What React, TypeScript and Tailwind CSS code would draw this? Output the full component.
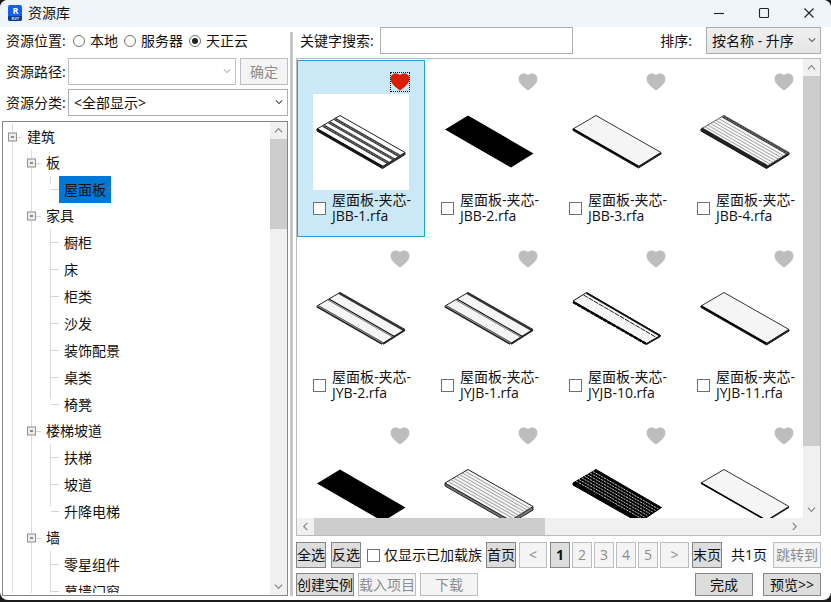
import { useState } from "react";
import type { ReactNode } from "react";
import { clsx } from "clsx";

type Variant =
  | "ribbed"
  | "black"
  | "plain"
  | "lined"
  | "double"
  | "narrow"
  | "thin"
  | "striped"
  | "mesh";

const parts: { id: number; name?: string; variant: Variant }[] = [
  { id: 1, name: "屋面板-夹芯-JBB-1.rfa", variant: "ribbed" },
  { id: 2, name: "屋面板-夹芯-JBB-2.rfa", variant: "black" },
  { id: 3, name: "屋面板-夹芯-JBB-3.rfa", variant: "plain" },
  { id: 4, name: "屋面板-夹芯-JBB-4.rfa", variant: "lined" },
  { id: 5, name: "屋面板-夹芯-JYB-2.rfa", variant: "double" },
  { id: 6, name: "屋面板-夹芯-JYJB-1.rfa", variant: "double" },
  { id: 7, name: "屋面板-夹芯-JYJB-10.rfa", variant: "narrow" },
  { id: 8, name: "屋面板-夹芯-JYJB-11.rfa", variant: "plain" },
  { id: 9, variant: "black" },
  { id: 10, variant: "striped" },
  { id: 11, variant: "mesh" },
  { id: 12, variant: "thin" },
];

type Node = { label: string; level: 0 | 1 | 2; last?: boolean };

const tree: Node[] = [
  { label: "建筑", level: 0 },
  { label: "板", level: 1 },
  { label: "屋面板", level: 2, last: true },
  { label: "家具", level: 1 },
  { label: "橱柜", level: 2 },
  { label: "床", level: 2 },
  { label: "柜类", level: 2 },
  { label: "沙发", level: 2 },
  { label: "装饰配景", level: 2 },
  { label: "桌类", level: 2 },
  { label: "椅凳", level: 2, last: true },
  { label: "楼梯坡道", level: 1 },
  { label: "扶梯", level: 2 },
  { label: "坡道", level: 2 },
  { label: "升降电梯", level: 2, last: true },
  { label: "墙", level: 1 },
  { label: "零星组件", level: 2 },
  { label: "幕墙门窗", level: 2 },
];

// A strip running the length of the board; t is the position across it, 0 to 1.
function Strip({ t, width = 1, color = "#222", dash }: { t: number; width?: number; color?: string; dash?: string }) {
  const x = 4 + 23 * t;
  const y = 35 - 13.5 * t;
  return <line x1={x} y1={y} x2={x + 65.5} y2={y + 37.5} stroke={color} strokeWidth={width} strokeDasharray={dash} />;
}

function Board({ variant }: { variant: Variant }) {
  const outline = "M27 21.5 L92 58.5 L69.5 72.5 L4 35 Z";
  let body: ReactNode;
  switch (variant) {
    case "black":
      body = <path d="M27 21.5 L92.5 59.5 L70 73.5 L4 35.5 Z" fill="#000" />;
      break;
    case "narrow":
      body = (
        <>
          <path d="M4 30 L4 32 L77.5 74 L91.5 66 L91.5 64.5" fill="#111" />
          <path d="M17.5 21.5 L91.5 64.5 L77.5 72.5 L4 30 Z" fill="#f5f5f5" stroke="#111" strokeWidth="1" />
          <path d="M17.5 22 L91.5 65" stroke="#111" strokeWidth="2" />
          <path d="M14.5 24 L87.5 66.5" stroke="#222" strokeWidth="1" strokeDasharray="5 1" />
          <path d="M4 31 L77.5 73" stroke="#000" strokeWidth="2.4" strokeDasharray="4 1" />
        </>
      );
      break;
    case "ribbed":
      body = (
        <>
          <path d="M4 35 L4 37 L69.5 74.5 L92 60.5 L92 58.5 L69.5 72.5 Z" fill="#222" stroke="#111" />
          <path d={outline} fill="#fff" stroke="#222" strokeWidth="1" />
          {[0.26, 0.51, 0.76].map((t) => (
            <g key={t}>
              <Strip t={t} width={2.8} color="#333" />
              <Strip t={t} width={0.7} color="#aaa" dash="2 1" />
            </g>
          ))}
          <Strip t={0} width={2} color="#111" />
          <path d="M69.5 73.5 L92 59.5" stroke="#333" strokeWidth="2" />
        </>
      );
      break;
    case "lined":
      body = (
        <>
          <path d="M4 35 L4 37 L69.5 74.5 L92 60.5 L92 58.5 L69.5 72.5 Z" fill="#222" stroke="#111" />
          <path d={outline} fill="#fafafa" stroke="#333" strokeWidth="0.8" />
          {[0.17, 0.29, 0.41, 0.53, 0.65, 0.77].map((t) => (
            <Strip key={t} t={t} width={0.8} color="#888" />
          ))}
          <Strip t={0.94} width={2.6} color="#333" />
          <Strip t={0.94} width={0.8} color="#999" dash="2 1" />
          <Strip t={0.03} width={2.4} color="#222" />
        </>
      );
      break;
    case "double":
      body = (
        <>
          <path d={outline} fill="#f5f5f5" stroke="#222" strokeWidth="1" />
          <Strip t={0.96} width={2.2} color="#333" />
          <Strip t={0.52} width={1.2} color="#111" />
          <Strip t={0.46} width={1} color="#777" />
          <Strip t={0} width={3} color="#222" />
          <Strip t={0.02} width={0.8} color="#bbb" />
          <path d="M70 73 L92 59" stroke="#222" strokeWidth="1.6" />
        </>
      );
      break;
    case "striped":
      body = (
        <>
          <path d="M4 35 L4 38 L69.5 75.5 L92 62 L92 58.5 L69.5 72.5 Z" fill="#777" stroke="#222" />
          <path d={outline} fill="#f4f4f4" stroke="#222" strokeWidth="1" />
          {[0.13, 0.25, 0.37, 0.5, 0.63, 0.75, 0.87].map((t) => (
            <Strip key={t} t={t} width={0.8} color="#888" />
          ))}
        </>
      );
      break;
    case "mesh":
      body = (
        <>
          <path d="M27 21.5 L92.5 59.5 L70 74.5 L4 37 L4 35 Z" fill="#000" stroke="#000" />
          {[0.14, 0.26, 0.38, 0.5, 0.62, 0.74, 0.86].map((t) => (
            <Strip key={t} t={t} width={0.8} color="#eee" dash="2.4 0.8" />
          ))}
        </>
      );
      break;
    default:
      body = (
        <>
          {variant === "plain" && (
            <path d="M4 35 L4 36.5 L69.5 74 L92 60 L92 58.5 L69.5 72.5 Z" fill="#444" stroke="#222" />
          )}
          <path d={outline} fill="#f5f5f5" stroke="#333" strokeWidth="1" />
          <Strip t={0} width={variant === "plain" ? 2 : 1.6} color="#000" />
          <path d="M69.5 73 L92 59" stroke="#222" strokeWidth="1.6" />
        </>
      );
  }
  return (
    <svg viewBox="0 0 96 96" className="mt-[2px] size-24 shrink-0 bg-white" fill="none" aria-hidden="true">
      {body}
    </svg>
  );
}

function Heart({ active, onClick }: { active: boolean; onClick: () => void }) {
  return (
    <button
      type="button"
      aria-label="收藏"
      aria-pressed={active}
      onClick={onClick}
      className={clsx("h-5 w-5 self-end", active && "outline-1 -outline-offset-1 outline-dotted outline-black")}
    >
      <svg viewBox="0 0 20 20" className="size-5" fill={active ? "#dc1c00" : "#bdbdbd"} aria-hidden="true">
        <path d="M10 18.5 C6.5 15.8 0.6 12.2 0.6 6.8 C0.6 3.4 3 1.4 5.6 1.4 C7.5 1.4 9.2 2 10 3.1 C10.8 2 12.5 1.4 14.4 1.4 C17 1.4 19.4 3.4 19.4 6.8 C19.4 12.2 13.5 15.8 10 18.5 Z" />
      </svg>
    </button>
  );
}

function Chevron({ dir, className }: { dir: "up" | "down" | "left" | "right"; className: string }) {
  const d = {
    up: "M1 7 L5 3 L9 7",
    down: "M1 3 L5 7 L9 3",
    left: "M7 1 L3 5 L7 9",
    right: "M3 1 L7 5 L3 9",
  }[dir];
  return (
    <svg viewBox="0 0 10 10" className={className} fill="none" stroke="currentColor" strokeWidth="1.3" aria-hidden="true">
      <path d={d} />
    </svg>
  );
}

function VerticalScroll({ thumb }: { thumb: string }) {
  return (
    <div className="flex w-[17px] shrink-0 flex-col bg-[#f0f0f0] text-[#868686]">
      <button type="button" aria-label="向上滚动" className="flex h-[17px] items-center justify-center">
        <Chevron dir="up" className="size-[9px]" />
      </button>
      <div className="min-h-0 flex-1">
        <div className={clsx("bg-[#cdcdcd]", thumb)} />
      </div>
      <button type="button" aria-label="向下滚动" className="flex h-[17px] items-center justify-center">
        <Chevron dir="down" className="size-[9px]" />
      </button>
    </div>
  );
}

function Select({ id, options, disabled, className, arrow }: {
  id: string;
  options: string[];
  disabled?: boolean;
  className: string;
  arrow: string;
}) {
  return (
    <div className="relative flex">
      <select
        id={id}
        disabled={disabled}
        className={clsx("h-[27px] w-full appearance-none border pr-5 pl-[5px] outline-none", className)}
      >
        {options.map((o) => (
          <option key={o}>{o}</option>
        ))}
      </select>
      <Chevron dir="down" className={clsx("pointer-events-none absolute top-[9px] right-[5px] size-2", arrow)} />
    </div>
  );
}

function Button({ children, className, disabled }: { children: ReactNode; className: string; disabled?: boolean }) {
  return (
    <button
      type="button"
      disabled={disabled}
      className={clsx(
        "flex shrink-0 items-center justify-center border whitespace-nowrap",
        disabled ? "border-[#b9bec2] bg-[#f4f4f4] text-[#8c8c8c]" : "border-[#858585] bg-[#dddddd]",
        className,
      )}
    >
      {children}
    </button>
  );
}

function Guide({ width, line, stub, expander }: {
  width: string;
  line: "full" | "short";
  stub?: boolean;
  expander?: boolean;
}) {
  return (
    <span className={clsx("relative flex shrink-0 self-stretch pl-[9px]", width)}>
      <span className={clsx("w-px bg-[#dcdcdc]", line === "full" ? "h-full" : "h-2")} />
      {stub && <span className="h-px flex-1 self-center bg-[#d4d4d4]" />}
      {expander && (
        <span className="absolute top-1/2 left-[5px] flex size-[9px] -translate-y-1/2 items-center justify-center border border-[#929292] bg-[#ececec]">
          <span className="h-px w-[3px] bg-[#333]" />
        </span>
      )}
    </span>
  );
}

function Tree() {
  const [selected, setSelected] = useState("屋面板");
  return (
    <div className="flex min-h-0 flex-1 border border-[#828790]">
      <div className="mb-[2px] min-w-0 flex-1 overflow-hidden">
        <ul className="pt-[2px]">
          {tree.map((n) => (
            <li key={n.label} className={clsx("flex items-center", n.level === 2 ? "h-[27px]" : "h-[26px]")}>
              <Guide width="w-[19px]" line="full" expander={n.level === 0} stub={n.level === 0} />
              {n.level > 0 && <Guide width="w-[19px]" line="full" expander={n.level === 1} stub={n.level === 1} />}
              {n.level === 2 && <Guide width="w-[18px]" line={n.last ? "short" : "full"} stub />}
              <button
                type="button"
                onClick={() => setSelected(n.label)}
                className={clsx("h-full px-[5px] whitespace-nowrap", selected === n.label && "bg-[#0078d7]")}
              >
                {n.label}
              </button>
            </li>
          ))}
        </ul>
      </div>
      <VerticalScroll thumb="h-[90px]" />
    </div>
  );
}

function Sidebar() {
  return (
    <aside className="flex w-[286px] shrink-0 flex-col">
      <div role="radiogroup" aria-labelledby="location" className="flex h-[27px] items-center pl-1">
        <span id="location" className="w-[67px]">
          资源位置:
        </span>
        {["本地", "服务器", "天正云"].map((t, i) => (
          <label key={t} className="mr-[6px] flex items-center gap-[5px]">
            <input
              type="radio"
              name="location"
              defaultChecked={i === 2}
              className="size-3 appearance-none rounded-full border border-[#707070] bg-white bg-clip-content p-[2px] checked:bg-[#222]"
            />
            {t}
          </label>
        ))}
      </div>
      <div className="mt-1 grid grid-cols-[62px_1fr] items-center gap-y-1 pl-1">
        <label htmlFor="path">资源路径:</label>
        <div className="grid grid-cols-[1fr_48px] gap-1">
          <Select id="path" options={[""]} disabled className="border-[#bcbfc6] bg-white" arrow="text-[#b0b0b0]" />
          <Button disabled className="h-[27px]">
            确定
          </Button>
        </div>
        <label htmlFor="category">资源分类:</label>
        <Select id="category" options={["<全部显示>"]} className="border-[#acaeb4] bg-white" arrow="text-[#444]" />
      </div>
      <div className="mt-[5px] flex min-h-0 flex-1">
        <Tree />
      </div>
    </aside>
  );
}

function Card({ name, variant, selected }: { name?: string; variant: Variant; selected: boolean }) {
  const [liked, setLiked] = useState(selected);
  return (
    <li
      className={clsx(
        "flex h-[177px] flex-col border pt-[11px] pr-[14px] pl-[15px]",
        selected ? "border-[#26a0da] bg-[#cbe8f6]" : "border-transparent",
      )}
    >
      <Heart active={liked} onClick={() => setLiked(!liked)} />
      <Board variant={variant} />
      {name && (
        <label className="mt-[2px] flex w-[104px] items-center gap-[6px]">
          <input
            type="checkbox"
            className="size-[13px] shrink-0 appearance-none border border-[#707070] bg-white checked:bg-[#333]"
          />
          <span className="leading-4">{name}</span>
        </label>
      )}
    </li>
  );
}

function Gallery() {
  return (
    <div className="mt-1 flex min-h-0 flex-1 flex-col border border-[#b9bbc1]">
      <div className="flex min-h-0 flex-1">
        <ul className="grid min-w-0 flex-1 auto-rows-[177px] grid-cols-[repeat(4,128px)] overflow-hidden pt-px">
          {parts.map((p) => (
            <Card key={p.id} name={p.name} variant={p.variant} selected={p.id === 1} />
          ))}
        </ul>
        <VerticalScroll thumb="h-[87%]" />
      </div>
      <div className="flex h-[17px] shrink-0 bg-[#f0f0f0] pr-[17px] text-[#868686]">
        <button type="button" aria-label="向左滚动" className="flex w-[17px] items-center justify-center">
          <Chevron dir="left" className="size-[9px]" />
        </button>
        <div className="flex-1">
          <div className="h-full w-[49%] bg-[#cdcdcd]" />
        </div>
        <button type="button" aria-label="向右滚动" className="flex w-[17px] items-center justify-center">
          <Chevron dir="right" className="size-[9px]" />
        </button>
      </div>
    </div>
  );
}

function Main() {
  return (
    <main className="flex min-w-0 flex-1 flex-col pr-[10px] pl-[3px]">
      <div className="flex items-center">
        <label htmlFor="search" className="w-[84px] pl-1 whitespace-nowrap">
          关键字搜索:
        </label>
        <input id="search" type="text" className="h-[27px] w-[193px] border border-[#abadb3] px-1 outline-none" />
        <label htmlFor="sort" className="mr-[14px] ml-auto">
          排序:
        </label>
        <div className="w-[115px]">
          <Select
            id="sort"
            options={["按名称 - 升序"]}
            className="border-[#acacac] bg-linear-to-b from-[#f0f0f0] to-[#e5e5e5]"
            arrow="text-[#555]"
          />
        </div>
      </div>
      <Gallery />
      <div className="mt-[6px] flex items-center">
        <Button className="h-[26px] w-[30px]">全选</Button>
        <Button className="ml-[5px] h-[26px] w-[30px]">反选</Button>
        <label className="mr-1 ml-[6px] flex items-center gap-1 whitespace-nowrap">
          <input
            type="checkbox"
            className="size-[13px] appearance-none border border-[#707070] bg-white checked:bg-[#333]"
          />
          仅显示已加载族
        </label>
        <Button className="h-[26px] w-[30px]">首页</Button>
        <Button disabled className="mx-[3px] h-[26px] w-7">
          &lt;
        </Button>
        <div className="flex gap-[2px]">
          <Button className="h-[26px] w-5 font-bold">1</Button>
          {[2, 3, 4, 5].map((n) => (
            <Button key={n} disabled className="h-[26px] w-5">
              {n}
            </Button>
          ))}
          <Button disabled className="h-[26px] w-[29px]">
            &gt;
          </Button>
        </div>
        <Button className="ml-[3px] h-[26px] w-[30px]">末页</Button>
        <span className="ml-auto whitespace-nowrap">共1页</span>
        <Button disabled className="ml-[6px] h-[26px] w-12">
          跳转到
        </Button>
      </div>
      <div className="mt-[5px] flex items-center gap-1">
        <Button className="h-[23px] w-[58px]">创建实例</Button>
        <Button disabled className="h-[23px] w-[58px]">
          载入项目
        </Button>
        <Button disabled className="h-[23px] w-[58px]">
          下载
        </Button>
        <Button className="mr-[6px] ml-auto h-[23px] w-[58px]">完成</Button>
        <Button className="h-[23px] w-[58px]">预览&gt;&gt;</Button>
      </div>
    </main>
  );
}

function TitleBar() {
  return (
    <header className="flex h-[27px] shrink-0 items-center bg-[#eff4f9] pb-[2px] pl-2">
      <svg viewBox="0 0 14 16" className="h-4 w-[14px] overflow-visible" aria-hidden="true">
        <rect width="14" height="16" rx="2" fill="#0f62f5" />
        <path d="M0 11 H14 V14 Q14 16 12 16 H2 Q0 16 0 14 Z" fill="#0a3c9c" />
        <text x="7.4" y="9.4" textAnchor="middle" fontSize="9" fontWeight="700" fill="#fff">
          R
        </text>
        <text x="7.4" y="14.8" textAnchor="middle" fontSize="4" fontWeight="700" fill="#cfe0ff">
          RVT
        </text>
      </svg>
      <h1 className="ml-[6px]">资源库</h1>
      <div className="ml-auto flex h-full">
        {[
          { label: "最小化", d: "M1 6.5 H11" },
          { label: "最大化", d: "M2.5 1.5 H9.5 Q10.5 1.5 10.5 2.5 V9.5 Q10.5 10.5 9.5 10.5 H2.5 Q1.5 10.5 1.5 9.5 V2.5 Q1.5 1.5 2.5 1.5 Z" },
          { label: "关闭", d: "M1.5 1.5 L10.5 10.5 M10.5 1.5 L1.5 10.5" },
        ].map((b) => (
          <button key={b.label} type="button" aria-label={b.label} className="flex w-[45px] items-center justify-center">
            <svg viewBox="0 0 12 12" className="size-3" fill="none" stroke="#222" strokeWidth="1.1" aria-hidden="true">
              <path d={b.d} />
            </svg>
          </button>
        ))}
      </div>
    </header>
  );
}

export default function App() {
  return (
    <div className="h-screen bg-[#1b1b1b] pb-[2px] font-['Open_Sans','Noto_Sans_CJK_SC',sans-serif] text-[14px] leading-5 text-[#111]">
      <div className="flex h-full flex-col overflow-hidden rounded-lg bg-white">
        <TitleBar />
        <div className="flex min-h-0 flex-1 pb-1 pl-[2px]">
          <Sidebar />
          <div className="mt-[5px] ml-[2px] w-[3px] shrink-0 bg-[#c6c6c6]" />
          <Main />
        </div>
      </div>
    </div>
  );
}
